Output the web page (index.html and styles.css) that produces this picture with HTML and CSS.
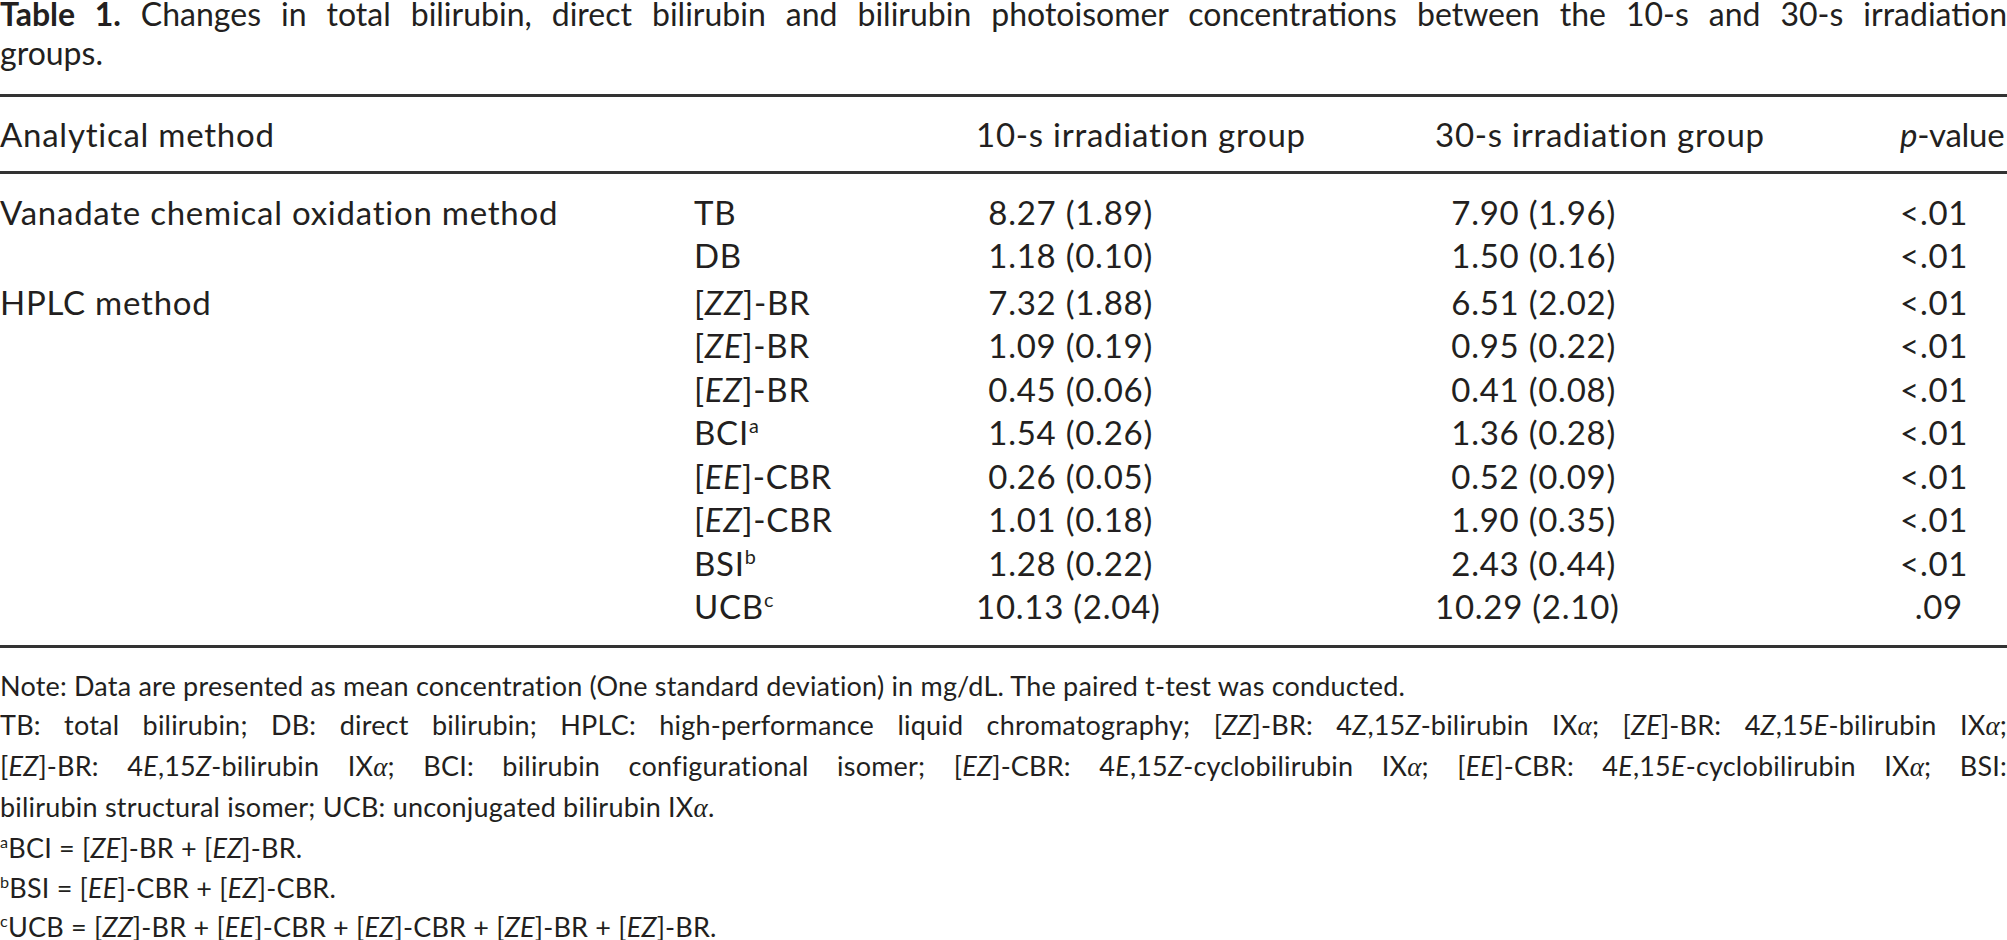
FILE: index.html
```html
<!DOCTYPE html>
<html lang="en">
<head>
<meta charset="utf-8">
<title>Table 1</title>
<link rel="stylesheet" href="styles.css">
</head>
<body>
<div class="page">
  <div class="caption">
    <span class="jl"><b>Table 1.</b> Changes in total bilirubin, direct bilirubin and bilirubin photoisomer concentrations between the 10-s and 30-s irradiation</span>
    <span class="line">groups.</span>
  </div>

  <div class="table">
    <div class="thead grid">
      <div class="c">Analytical method</div>
      <div class="c"></div>
      <div class="c">10-s irradiation group</div>
      <div class="c">30-s irradiation group</div>
      <div class="c ph"><i>p</i>-value</div>
    </div>

    <div class="tbody">
      <div class="group grid">
        <div class="c">Vanadate chemical oxidation method</div>
        <div class="c">TB</div>
        <div class="c v10">8.27 (1.89)</div>
        <div class="c v30">7.90 (1.96)</div>
        <div class="c vp">&lt;.01</div>

        <div class="c"></div>
        <div class="c">DB</div>
        <div class="c v10">1.18 (0.10)</div>
        <div class="c v30">1.50 (0.16)</div>
        <div class="c vp">&lt;.01</div>
      </div>

      <div class="group group-2 grid">
        <div class="c">HPLC method</div>
        <div class="c">[<i>ZZ</i>]-BR</div>
        <div class="c v10">7.32 (1.88)</div>
        <div class="c v30">6.51 (2.02)</div>
        <div class="c vp">&lt;.01</div>

        <div class="c"></div>
        <div class="c">[<i>ZE</i>]-BR</div>
        <div class="c v10">1.09 (0.19)</div>
        <div class="c v30">0.95 (0.22)</div>
        <div class="c vp">&lt;.01</div>

        <div class="c"></div>
        <div class="c">[<i>EZ</i>]-BR</div>
        <div class="c v10">0.45 (0.06)</div>
        <div class="c v30">0.41 (0.08)</div>
        <div class="c vp">&lt;.01</div>

        <div class="c"></div>
        <div class="c">BCI<sup>a</sup></div>
        <div class="c v10">1.54 (0.26)</div>
        <div class="c v30">1.36 (0.28)</div>
        <div class="c vp">&lt;.01</div>

        <div class="c"></div>
        <div class="c">[<i>EE</i>]-CBR</div>
        <div class="c v10">0.26 (0.05)</div>
        <div class="c v30">0.52 (0.09)</div>
        <div class="c vp">&lt;.01</div>

        <div class="c"></div>
        <div class="c">[<i>EZ</i>]-CBR</div>
        <div class="c v10">1.01 (0.18)</div>
        <div class="c v30">1.90 (0.35)</div>
        <div class="c vp">&lt;.01</div>

        <div class="c"></div>
        <div class="c">BSI<sup>b</sup></div>
        <div class="c v10">1.28 (0.22)</div>
        <div class="c v30">2.43 (0.44)</div>
        <div class="c vp">&lt;.01</div>

        <div class="c"></div>
        <div class="c">UCB<sup>c</sup></div>
        <div class="c v10">10.13 (2.04)</div>
        <div class="c v30">10.29 (2.10)</div>
        <div class="c vp">.09</div>
      </div>
    </div>
  </div>

  <div class="notes">
    <span class="line">Note: Data are presented as mean concentration (One standard deviation) in mg/dL. The paired t-test was conducted.</span>
    <span class="jl">TB: total bilirubin; DB: direct bilirubin; HPLC: high-performance liquid chromatography; [<i>ZZ</i>]-BR: 4<i>Z</i>,15<i>Z</i>-bilirubin IX<span class="greek">α</span>; [<i>ZE</i>]-BR: 4<i>Z</i>,15<i>E</i>-bilirubin IX<span class="greek">α</span>;</span>
    <span class="jl">[<i>EZ</i>]-BR: 4<i>E</i>,15<i>Z</i>-bilirubin IX<span class="greek">α</span>; BCI: bilirubin configurational isomer; [<i>EZ</i>]-CBR: 4<i>E</i>,15<i>Z</i>-cyclobilirubin IX<span class="greek">α</span>; [<i>EE</i>]-CBR: 4<i>E</i>,15<i>E</i>-cyclobilirubin IX<span class="greek">α</span>; BSI:</span>
    <span class="line">bilirubin structural isomer; UCB: unconjugated bilirubin IX<span class="greek">α</span>.</span>
    <span class="line"><sup>a</sup>BCI = [<i>ZE</i>]-BR + [<i>EZ</i>]-BR.</span>
    <span class="line"><sup>b</sup>BSI = [<i>EE</i>]-CBR + [<i>EZ</i>]-CBR.</span>
    <span class="line"><sup>c</sup>UCB = [<i>ZZ</i>]-BR + [<i>EE</i>]-CBR + [<i>EZ</i>]-CBR + [<i>ZE</i>]-BR + [<i>EZ</i>]-BR.</span>
  </div>
</div>
</body>
</html>
```

FILE: styles.css
```css
html, body {
  margin: 0;
  padding: 0;
  background: #ffffff;
}

body {
  font-family: Lato, "Open Sans", "Noto Sans", sans-serif;
  color: #231f20;
}

.page {
  width: 2007px;
  overflow: hidden;
}

.caption {
  font-size: 32px;
  line-height: 38.5px;
  margin-top: -5px;
}

.caption b {
  font-weight: 700;
}

.line {
  display: block;
}

.jl {
  display: block;
  text-align: justify;
  text-align-last: justify;
}

.table {
  margin-top: 22px;
  border-top: 3px solid #333333;
  border-bottom: 3px solid #333333;
  font-size: 33px;
  letter-spacing: 0.75px;
}

.grid {
  display: grid;
  grid-template-columns: 694px 282px 459px 465px 107px;
}

.c {
  line-height: 43.5px;
  white-space: nowrap;
}

.thead {
  padding-top: 16px;
  padding-bottom: 14px;
  border-bottom: 3px solid #333333;
}

.ph {
  letter-spacing: -0.3px;
}

.tbody {
  padding-top: 17px;
  padding-bottom: 16px;
}

.group-2 {
  margin-top: 3px;
}

.v10 {
  text-align: right;
  padding-right: 282px;
}

.v30 {
  text-align: right;
  padding-right: 284px;
}

.vp {
  text-align: right;
  padding-right: 44px;
}

sup {
  font-size: 0.6em;
  line-height: 0;
  vertical-align: 0.6em;
}

.notes {
  margin-top: 18px;
  font-size: 27px;
  letter-spacing: 0.2px;
  line-height: 39.2px;
}

.greek {
  font-family: "Liberation Serif", serif;
  font-style: italic;
}
```
